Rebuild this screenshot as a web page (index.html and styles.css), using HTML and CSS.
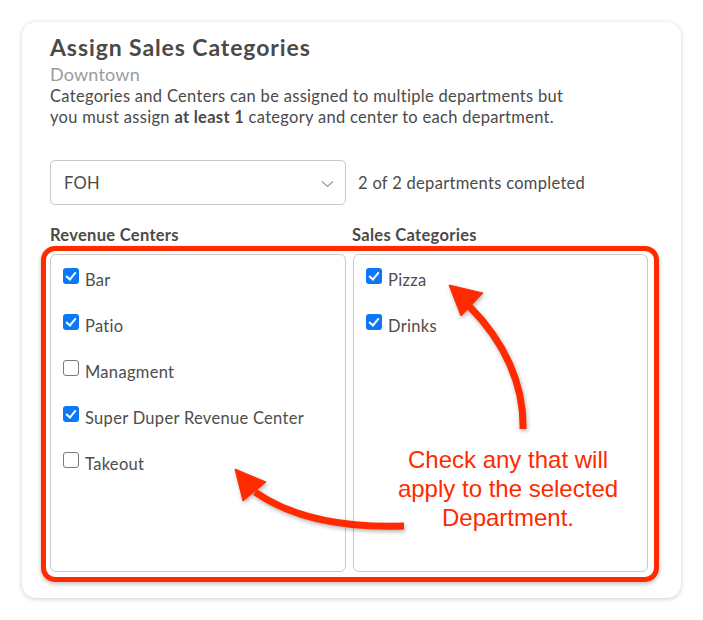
FILE: index.html
```html
<!DOCTYPE html>
<html>
<head>
<meta charset="utf-8">
<link rel="stylesheet" href="styles.css">
</head>
<body>
<div class="page">
  <div class="card">
    <h1 class="title">Assign Sales Categories</h1>
    <div class="subtitle">Downtown</div>
    <p class="desc">Categories and Centers can be assigned to multiple departments but you must assign <b>at least 1</b> category and center to each department.</p>
    <div class="select-row">
      <div class="select">
        <span>FOH</span>
        <svg class="chev" width="13" height="8" viewBox="0 0 13 8"><path d="M1 1.5 L6.5 6.5 L12 1.5" fill="none" stroke="#9a9a9a" stroke-width="1.2"/></svg>
      </div>
      <div class="status">2 of 2 departments completed</div>
    </div>
    <div class="labels">
      <div class="col-label">Revenue Centers</div>
      <div class="col-label">Sales Categories</div>
    </div>
    <div class="frame">
      <div class="box">
        <label class="item"><span class="cb on"></span><span class="txt">Bar</span></label>
        <label class="item"><span class="cb on"></span><span class="txt">Patio</span></label>
        <label class="item"><span class="cb"></span><span class="txt">Managment</span></label>
        <label class="item"><span class="cb on"></span><span class="txt">Super Duper Revenue Center</span></label>
        <label class="item"><span class="cb"></span><span class="txt">Takeout</span></label>
      </div>
      <div class="box">
        <label class="item"><span class="cb on"></span><span class="txt">Pizza</span></label>
        <label class="item"><span class="cb on"></span><span class="txt">Drinks</span></label>
      </div>
    </div>
  </div>
  <svg class="arrows" width="703" height="620" viewBox="0 0 703 620">
    <g fill="#ff2a00" stroke="#ff2a00">
      <path d="M523 429 C524 385 505 342 469 306" fill="none" stroke-width="7"/>
      <polygon points="449,285 483,293 461,316" stroke-width="1"/>
      <path d="M404 526 C345 528 292 518 255 492" fill="none" stroke-width="7"/>
      <polygon points="235,469 266,482 243,501" stroke-width="1"/>
    </g>
  </svg>
  <div class="note">Check any that will apply to the selected Department.</div>
</div>
</body>
</html>
```
FILE: styles.css
```css
html, body {
  margin: 0;
  padding: 0;
  background: #ffffff;
}
.page {
  position: relative;
  width: 703px;
  height: 620px;
  padding: 22px 0 0 22px;
  box-sizing: border-box;
  font-family: "Lato", "Liberation Sans", sans-serif;
  color: #4d4d4d;
}
.card {
  width: 659px;
  height: 576px;
  box-sizing: border-box;
  background: #fff;
  border-radius: 14px;
  box-shadow: 0 1px 5px rgba(0, 0, 0, 0.2);
  padding: 12px 33px 0 28px;
}
.title {
  margin: 0;
  font-size: 23px;
  line-height: 26px;
  font-weight: 700;
  letter-spacing: 0.9px;
  color: #4a4a4a;
}
.subtitle {
  margin-top: 4px;
  font-size: 18px;
  line-height: 20px;
  letter-spacing: 0.2px;
  color: #9b9b9b;
}
.desc {
  margin: 2px 0 0;
  font-size: 16.5px;
  line-height: 20.5px;
  letter-spacing: 0.3px;
  width: 530px;
  color: #4a4a4a;
}
.desc b {
  font-weight: 700;
}
.select-row {
  display: flex;
  align-items: center;
  gap: 12px;
  margin-top: 33px;
}
.select {
  width: 296px;
  height: 45px;
  box-sizing: border-box;
  border: 1px solid #c8c8c8;
  border-radius: 5px;
  display: flex;
  align-items: center;
  justify-content: space-between;
  padding: 0 11px 0 13px;
  font-size: 16.5px;
  letter-spacing: 0.3px;
  color: #4a4a4a;
}
.chev {
  margin-top: 2px;
}
.status {
  font-size: 16.5px;
  letter-spacing: 0.3px;
  color: #4a4a4a;
}
.labels {
  display: grid;
  grid-template-columns: 302px 296px;
  margin-top: 20px;
}
.col-label {
  font-size: 16.5px;
  line-height: 20px;
  font-weight: 700;
  letter-spacing: 0.3px;
  color: #4a4a4a;
}
.frame {
  margin: 1px -11px 0 -9px;
  border: 5px solid #ff2a00;
  border-radius: 14px;
  padding: 3px 5px 5px 4px;
  display: grid;
  grid-template-columns: 296px 295px;
  gap: 7px;
  box-shadow: 0 2px 4px rgba(0, 0, 0, 0.25);
}
.box {
  height: 318px;
  box-sizing: border-box;
  border: 1px solid #c9c9c9;
  border-radius: 6px;
  padding: 13px 12px;
  display: flex;
  flex-direction: column;
  gap: 30px;
}
.item {
  display: flex;
  align-items: flex-start;
  height: 16px;
  gap: 6px;
  font-size: 16.5px;
  line-height: 16px;
  letter-spacing: 0.3px;
  color: #4d4d4d;
}
.txt {
  padding-top: 4px;
}
.cb {
  width: 16px;
  height: 16px;
  box-sizing: border-box;
  border: 1px solid #7a7a7a;
  border-radius: 3px;
  background: #fff;
  flex: none;
  position: relative;
}
.cb.on {
  border: none;
  background: #0b78f7;
}
.cb.on::after {
  content: "";
  position: absolute;
  left: 5px;
  top: 2px;
  width: 4px;
  height: 8px;
  border-right: 2.5px solid #fff;
  border-bottom: 2.5px solid #fff;
  transform: rotate(40deg);
}
.arrows {
  position: absolute;
  left: 0;
  top: 0;
  pointer-events: none;
  filter: drop-shadow(1px 2px 2px rgba(0, 0, 0, 0.3));
}
.note {
  position: absolute;
  left: 392px;
  top: 445px;
  width: 232px;
  text-align: center;
  font-family: "Liberation Sans", Arial, sans-serif;
  font-size: 24px;
  line-height: 29px;
  color: #ff2a00;
}
```
